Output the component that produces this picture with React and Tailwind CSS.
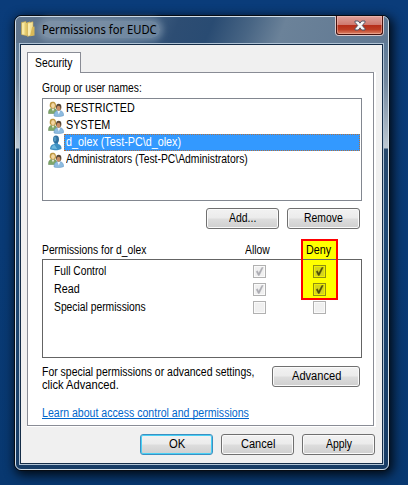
import React, { useLayoutEffect, useRef, useState } from "react";

/* Single line of text condensed to a fixed width. */
function Fit({ w, size = "text-[12px]", className = "", children }) {
  const ref = useRef(null);
  const [s, setS] = useState(1);
  useLayoutEffect(() => {
    setS(w / ref.current.offsetWidth);
  }, [w]);
  return (
    <span className="block overflow-visible whitespace-nowrap" style={{ width: w }}>
      <span ref={ref} className={"inline-block origin-left " + size + " " + className} style={{ transform: `scaleX(${s})` }}>
        {children}
      </span>
    </span>
  );
}

function Users() {
  return (
    <svg width="16" height="16" viewBox="0 0 16 16" className="shrink-0">
      <path d="M0.5 12.5C.5 8.5 2 7.2 5 7.2s4 2 4 5.300z" fill="#7fa668" stroke="#5c8250" strokeWidth=".5" />
      <path d="M3.700 7.500L5 10.500 6.300 7.500z" fill="#f4f4e8" />
      <path d="M1.900 6C1.200 1.500 3 .5 5 .7c2.800 0 3.300 2.500 2.900 5.600L6.500 7.500h-3z" fill="#bd9640" />
      <ellipse cx="5" cy="4.500" rx="1.900" ry="2.500" fill="#f3d6a2" />
      <path d="M6 15c0-4 1.600-5.500 4.800-5.500S15.500 11 15.700 14.500c-2 1.200-7 1.500-9.700.5z" fill="#8dbbe0" stroke="#5f93bf" strokeWidth=".5" />
      <path d="M9.300 9.500l1.500 4 1.500-4z" fill="#f2f8fb" />
      <ellipse cx="10.700" cy="6.100" rx="2.700" ry="3.400" fill="#574636" />
      <ellipse cx="10.500" cy="7.200" rx="1.900" ry="2.500" fill="#c98f66" />
    </svg>
  );
}

function Person() {
  return (
    <svg width="16" height="16" viewBox="0 0 16 16" className="shrink-0">
      <path d="M2 14c.2-3 1.400-4.500 4.500-5V7H10v2c2.300.4 3.500 2 3.600 4.400-.8 2-10.500 2.400-11.600.6z" fill="#3e8fc2" />
      <path d="M3.200 13.500c.6-2.500 1.500-3.100 3.500-3.500l2.500 4z" fill="#6fb8dd" />
      <ellipse cx="8" cy="4.300" rx="3" ry="3.900" fill="#2f6f9e" />
      <ellipse cx="7" cy="4" rx="1.500" ry="2.500" fill="#5197c0" />
    </svg>
  );
}

function Folder() {
  return (
    <svg width="15" height="16" viewBox="0 0 15 16" className="-mt-[2px] shrink-0">
      <path d="M.5 1.500L5 .5v14L.5 13.500z" fill="#f0dc86" stroke="#c8a84b" strokeWidth=".6" />
      <path d="M5 2l4-1.500v12.500L5 15z" fill="#e2c565" />
      <path d="M6.500 2L12 .8v13L6.500 15.500z" fill="#f3e39b" stroke="#c9a94e" strokeWidth=".6" />
      <path d="M11 6l2.500-.5v9L9 15.200z" fill="#d9b957" />
      <path d="M2 2v11.500M8 2.500v12" stroke="#fff5c2" />
    </svg>
  );
}

function Button({ width, textWidth, isDefault, children }) {
  return (
    <div
      className={
        "flex h-[21px] shrink-0 items-center justify-center rounded-[3px] border bg-[linear-gradient(180deg,#f2f2f2_0%,#ebebeb_48%,#dddddd_52%,#cfcfcf_100%)] " +
        (isDefault ? "border-[#3c8fc1] shadow-[inset_0_0_0_1px_#48d0f5]" : "border-[#707070] shadow-[inset_0_0_0_1px_#fafafa]")
      }
      style={{ width }}
    >
      <Fit w={textWidth}>{children}</Fit>
    </div>
  );
}

function Check({ on, strong }) {
  return (
    <div
      className={
        "flex size-[13px] items-center justify-center border " +
        (strong ? "border-[#8f8f12] bg-[#d5d51d] shadow-[inset_0_0_0_1px_#f0f000]" : "border-[#b1b1b1] bg-[#f0f0f0] shadow-[inset_0_0_0_1px_#fafafa]")
      }
    >
      {on && (
        <svg width="11" height="11" viewBox="0 0 11 11">
          <path d="M2.200 5.500L3.500 4.700 4.700 7.200 7.800 1.500h1.400L5.300 9.500H4.200z" fill={strong ? "#4c4c08" : "#acacb2"} stroke={strong ? "#4c4c08" : "#acacb2"} strokeWidth=".4" />
        </svg>
      )}
    </div>
  );
}

function UserRow({ icon, w, selected, children }) {
  return (
    <div className="flex h-[17px]">
      <div className="flex w-[16px] items-center">{icon}</div>
      <div
        className={
          "flex flex-1 items-center " +
          (selected ? "border border-dotted border-[#b3703c] bg-[#3399ff] pl-px text-white" : "pl-[2px]")
        }
      >
        <Fit w={w}>{children}</Fit>
      </div>
    </div>
  );
}

function PermRow({ label, w, on, strong }) {
  return (
    <div className="flex h-[18px] items-center">
      <div className="w-[199px]">
        <Fit w={w}>{label}</Fit>
      </div>
      <div className="w-[60px]">
        <Check on={on} />
      </div>
      <Check on={on} strong={strong} />
    </div>
  );
}

export default function App() {
  return (
    <div className="h-[485px] w-[408px] overflow-hidden bg-linear-to-b from-[#0a3c7a] to-[#083870] pt-[15px] pl-[14px] font-['Liberation_Sans',Arial,sans-serif] text-[12px] leading-[13px] text-black">
      <div className="flex h-[456px] w-[376px] flex-col rounded-[7px] border border-[#060c14] bg-[#1d426e] shadow-[2px_3px_11px_1px_rgba(0,0,0,0.85)]">
        <div className="flex h-[454px] flex-col rounded-[6px] border border-[#d3dfe9] bg-[linear-gradient(180deg,#718aa4_0px,#5f7b97_28px,#73879d_65px,#bdc8d2_131px,#294a6d_132px,#204a76_210px,#173c65_100%)] px-[3px]">
          {/* Title bar */}
          <div className="-mx-[3px] flex h-[26px] shrink-0 items-start justify-between rounded-t-[5px] bg-[linear-gradient(112deg,#60758d_0%,#526b87_23%,#405e80_35%,#2d4d73_43%,#294b72_52%,#486584_62%,#6b8299_71%,#607892_100%)] pl-[5px]">
            <div className="flex items-center pt-[4px]">
              <Folder />
              <div className="ml-[5px] rounded-full bg-[#a6b7c8]/45 py-px pr-[3px] pl-px font-['Noto_Sans',sans-serif] leading-[15px] shadow-[0_0_6px_3px_rgba(166,183,200,0.45)]">
                <Fit w={115}>Permissions for EUDC</Fit>
              </div>
            </div>
            <div className="-mt-px mr-[4px] flex h-[20px] w-[49px] rounded-b-[4px] border border-t-0 border-[#dbc9cb]">
              <div className="flex flex-1 items-center justify-center rounded-b-[3px] border border-t-0 border-[#48120e] bg-[linear-gradient(180deg,#dfa19a_0%,#cf796f_48%,#b52c19_50%,#bd3d24_75%,#dd8568_100%)] shadow-[inset_0_0_0_1px_rgba(255,210,200,0.4)]">
                <svg width="12" height="11" viewBox="0 0 12 11">
                  <path d="M1 1h3.300L6 3.200 7.700 1H11v1.300L8.300 5.500 11 8.700V10H7.700L6 7.800 4.300 10H1V8.700l2.700-3.200L1 2.300z" fill="#f7f7f7" stroke="#535666" />
                </svg>
              </div>
            </div>
          </div>

          {/* Client area */}
          <div className="flex h-[422px] w-[365px] shrink-0 flex-col self-start border border-[#b0c3d5]">
            <div className="flex flex-1 flex-col border border-[#142c47] bg-[#f0f0f0] pt-[7px] pl-[6px]">
              <div className="relative z-10 flex h-[21px] w-[54px] shrink-0 items-center border border-b-0 border-[#898c95] bg-white pl-[7px]">
                <Fit w={37}>Security</Fit>
              </div>
              <div className="-mt-px h-[355px] w-[349px] shrink-0 bg-white">
                <div className="flex h-[354px] w-[347px] flex-col border border-[#898c95] bg-white pl-[14px]">
                  <div className="mt-[9px] h-[16px]">
                    <Fit w={100}>Group or user names:</Fit>
                  </div>
                  <div className="h-[103px] w-[320px] shrink-0 border border-[#828790] pt-[1px] pr-px pl-[5px]">
                    <UserRow icon={<Users />} w={69}>RESTRICTED</UserRow>
                    <UserRow icon={<Users />} w={44}>SYSTEM</UserRow>
                    <UserRow icon={<Person />} w={115} selected>d_olex (Test-PC\d_olex)</UserRow>
                    <UserRow icon={<Users />} w={182}>Administrators (Test-PC\Administrators)</UserRow>
                  </div>
                  <div className="mt-[7px] flex w-[318px] justify-end gap-[8px]">
                    <Button width={73} textWidth={27}>Add...</Button>
                    <Button width={73} textWidth={39}>Remove</Button>
                  </div>

                  {/* Permission grid with the highlighted Deny column */}
                  <div className="relative mt-[10px] h-[119px] shrink-0">
                    <div className="absolute top-0 left-[259px] h-[61px] w-[37px] bg-[#ffff00]" />
                    <div className="relative flex h-[20px] items-center pt-[2px]">
                      <div className="w-[203px]">
                        <Fit w={104}>Permissions for d_olex</Fit>
                      </div>
                      <div className="w-[61px]">
                        <Fit w={25}>Allow</Fit>
                      </div>
                      <Fit w={25}>Deny</Fit>
                    </div>
                    <div className="relative h-[99px] w-[320px] border border-[#646464] pt-[2px] pl-[11px]">
                      <PermRow label="Full Control" w={52} on strong />
                      <PermRow label="Read" w={26} on strong />
                      <PermRow label="Special permissions" w={92} />
                    </div>
                    <div className="absolute top-0 left-[259px] h-[61px] w-[37px] border-2 border-[#ff0000]" />
                  </div>

                  <div className="mt-[8px] flex w-[318px] justify-between">
                    <div>
                      <Fit w={212}>For special permissions or advanced settings,</Fit>
                      <Fit w={77}>click Advanced.</Fit>
                    </div>
                    <Button width={88} textWidth={49}>Advanced</Button>
                  </div>
                  <div className="mt-[15px] h-[12px] w-[207px] border-b border-[#0066cc] text-[#0066cc]">
                    <Fit w={207}>Learn about access control and permissions</Fit>
                  </div>
                </div>
              </div>
              <div className="mt-[7px] flex w-[348px] justify-end gap-[8px]">
                <Button width={73} textWidth={16} isDefault>OK</Button>
                <Button width={73} textWidth={34}>Cancel</Button>
                <Button width={73} textWidth={26}>Apply</Button>
              </div>
            </div>
          </div>
        </div>
      </div>
    </div>
  );
}
